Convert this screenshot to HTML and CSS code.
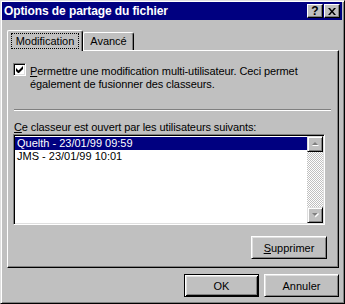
FILE: index.html
```html
<!DOCTYPE html>
<html lang="fr">
<head>
    <meta charset="UTF-8">
    <title>Options de partage du fichier</title>
    <link rel="stylesheet" href="styles.css">
</head>
<body>
    <div class="window">
        <div class="titlebar">
            <span class="title">Options de partage du fichier</span>
            <div class="title-buttons">
                <span class="tbtn help">?</span>
                <span class="tbtn close">
                    <svg width="8" height="7" viewBox="0 0 8 7"><path d="M0 0h2l2 2.5L6 0h2L5 3.5 8 7H6L4 4.5 2 7H0l3-3.5z" fill="#000"/></svg>
                </span>
            </div>
        </div>

        <div class="tabs">
            <div class="tab active"><span class="focus">Modification</span></div>
            <div class="tab">Avancé</div>
        </div>

        <div class="panel">
            <div class="check-row">
                <span class="checkbox">
                    <svg width="7" height="7" viewBox="0 0 7 7"><path d="M0 2v3l2 2h1l4-4V0L2.5 4.5z" fill="#000"/></svg>
                </span>
                <span class="check-label"><u>P</u>ermettre une modification multi-utilisateur. Ceci permet<br>également de fusionner des classeurs.</span>
            </div>

            <div class="separator"></div>

            <div class="list-label"><u>C</u>e classeur est ouvert par les utilisateurs suivants:</div>

            <div class="listbox">
                <div class="items">
                    <div class="item selected">Quelth - 23/01/99 09:59</div>
                    <div class="item">JMS - 23/01/99 10:01</div>
                </div>
                <div class="scrollbar">
                    <div class="sbtn">
                        <svg width="8" height="5" viewBox="0 0 8 5"><path d="M4 0L7 3H1z" fill="#808080"/><path d="M7 3l1 1H2l-1-1z" fill="#fff"/></svg>
                    </div>
                    <div class="track"></div>
                    <div class="sbtn">
                        <svg width="8" height="5" viewBox="0 0 8 5"><path d="M1 0h6L4 3z" fill="#808080"/><path d="M7 0l1 1-3.5 3.5L4 3z" fill="#fff"/></svg>
                    </div>
                </div>
            </div>

            <div class="panel-actions">
                <button class="btn"><u>S</u>upprimer</button>
            </div>
        </div>

        <div class="footer">
            <button class="btn default">OK</button>
            <button class="btn">Annuler</button>
        </div>
    </div>
</body>
</html>
```

FILE: styles.css
```css
body {
    margin: 0;
    font-family: "Liberation Sans", Arial, sans-serif;
    font-size: 11px;
    color: #000;
    background: #c0c0c0;
}
.window {
    width: 345px;
    height: 304px;
    box-sizing: border-box;
    background: #c0c0c0;
    border: 1px solid;
    border-color: #dfdfdf #000 #000 #dfdfdf;
    box-shadow: inset 1px 1px #fff, inset -1px -1px #808080;
}
.titlebar {
    height: 18px;
    margin: 1px 2px 0 1px;
    background: #000080;
    display: flex;
    align-items: center;
    justify-content: space-between;
    padding: 0 2px 0 2px;
}
.title {
    color: #fff;
    font-weight: bold;
    font-size: 12px;
    letter-spacing: -0.1px;
}
.title-buttons {
    display: flex;
    gap: 1px;
}
.tbtn {
    width: 16px;
    height: 14px;
    box-sizing: border-box;
    background: #c0c0c0;
    border: 1px solid;
    border-color: #fff #000 #000 #fff;
    box-shadow: inset -1px -1px #808080;
    display: flex;
    align-items: center;
    justify-content: center;
    font-weight: bold;
    font-size: 12px;
    line-height: 12px;
}
.tbtn.help {
    padding-bottom: 1px;
}
.tabs {
    display: flex;
    align-items: flex-end;
    height: 20px;
    margin: 10px 0 0 6px;
}
.tab {
    position: relative;
    width: 51px;
    height: 18px;
    box-sizing: border-box;
    text-align: center;
    line-height: 16px;
    background: #c0c0c0;
    border: 1px solid;
    border-bottom: none;
    border-color: #fff #000 #000 #fff;
    border-radius: 2px 3px 0 0;
    box-shadow: inset -1px 0 #808080;
}
.tab.active {
    z-index: 1;
    width: 76px;
    height: 21px;
    margin-bottom: -1px;
    padding: 2px 3px 0 3px;
    text-align: left;
}
.focus {
    display: block;
    height: 16px;
    box-sizing: border-box;
    text-align: center;
    line-height: 15px;
    border: 1px dotted #000;
}
.panel {
    width: 332px;
    height: 218px;
    box-sizing: border-box;
    margin-left: 6px;
    border: 1px solid;
    border-color: #fff #000 #000 #fff;
    box-shadow: inset -1px -1px #808080;
    padding: 12px 0 0 5px;
}
.check-row {
    display: flex;
    align-items: flex-start;
    gap: 4px;
}
.checkbox {
    width: 13px;
    height: 13px;
    box-sizing: border-box;
    background: #fff;
    border: 1px solid;
    border-color: #808080 #fff #fff #808080;
    box-shadow: inset 1px 1px #000, inset -1px -1px #dfdfdf;
    display: flex;
    align-items: center;
    justify-content: center;
}
.check-label {
    line-height: 13px;
    margin-top: 2px;
    letter-spacing: -0.1px;
}
.separator {
    width: 317px;
    margin: 18px 0 0 1px;
    border-top: 1px solid #808080;
    border-bottom: 1px solid #fff;
}
.list-label {
    margin: 10px 0 0 1px;
    line-height: 13px;
    letter-spacing: -0.1px;
}
.listbox {
    display: flex;
    width: 312px;
    height: 91px;
    box-sizing: border-box;
    border: 1px solid;
    border-color: #808080 #fff #fff #808080;
    box-shadow: inset 1px 1px #000, inset -1px -1px #dfdfdf;
    padding: 1px;
}
.items {
    flex: 1;
    background: #fff;
    padding-top: 1px;
}
.item {
    height: 13px;
    line-height: 13px;
    padding-left: 2px;
}
.item.selected {
    background: #000080;
    color: #fff;
}
.scrollbar {
    width: 16px;
    display: flex;
    flex-direction: column;
}
.sbtn {
    width: 16px;
    height: 16px;
    box-sizing: border-box;
    background: #c0c0c0;
    border: 1px solid;
    border-color: #dfdfdf #000 #000 #dfdfdf;
    box-shadow: inset 1px 1px #fff, inset -1px -1px #808080;
    display: flex;
    align-items: center;
    justify-content: center;
}
.track {
    flex: 1;
    background: repeating-conic-gradient(#c0c0c0 0 25%, #fff 0 50%) 0 0 / 2px 2px;
}
.panel-actions {
    display: flex;
    justify-content: flex-end;
    margin: 11px 11px 0 0;
}
.btn {
    width: 76px;
    height: 23px;
    box-sizing: border-box;
    padding: 0;
    font-family: inherit;
    font-size: 11px;
    color: #000;
    background: #c0c0c0;
    border: 1px solid;
    border-color: #fff #000 #000 #fff;
    box-shadow: inset 1px 1px #dfdfdf, inset -1px -1px #808080;
}
.footer {
    display: flex;
    justify-content: flex-end;
    gap: 5px;
    margin: 6px 5px 0 0;
}
.footer .btn {
    width: 75px;
}
.btn.default {
    border-color: #000;
    box-shadow: inset 1px 1px #fff, inset -1px -1px #000, inset 2px 2px #dfdfdf, inset -2px -2px #808080;
}
```
